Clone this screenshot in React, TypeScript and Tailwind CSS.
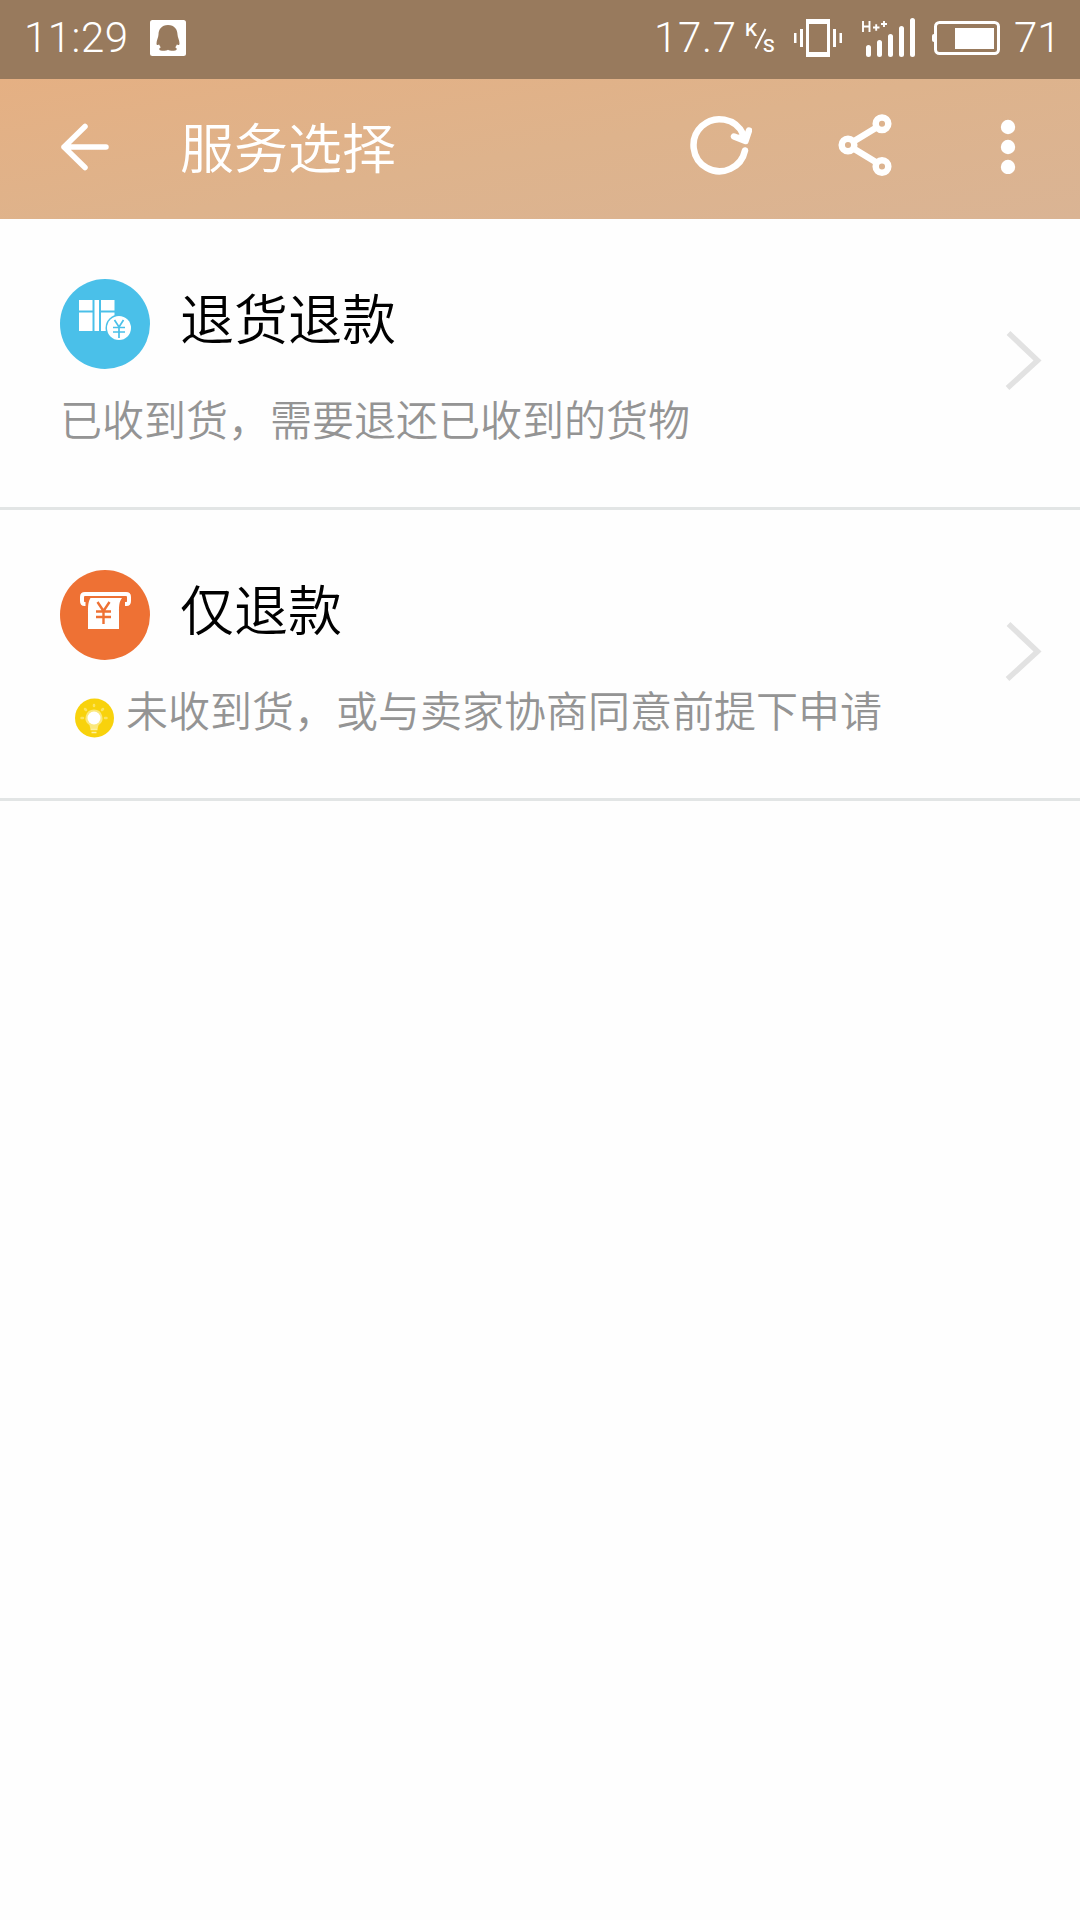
import type { ReactNode } from "react";

function StatusBar() {
  return (
    <div className="flex h-[79px] items-center bg-[#987a5d] pb-[3px] pl-[24px] pr-[24px] font-['Roboto',sans-serif] text-[42px] leading-none text-white">
      <span className="w-[126px] font-[350] tracking-[0.5px]">11:29</span>
      <svg width="36" height="36" viewBox="0 0 36 36">
        <rect width="36" height="36" rx="2.5" fill="#fff" />
        <path
          d="M18 5C11.5 5 8.5 9.5 8.5 14.5C8.5 17 6.5 20 6.5 23.5C6.5 25.5 8 25.5 9 24.2C9.6 25.7 10.2 26.6 10.8 27.3C8.6 28.3 8.5 30.5 12 30.8C14.5 31 17 30.5 18 29.8C19 30.5 21.5 31 24 30.8C27.5 30.5 27.4 28.3 25.2 27.3C25.8 26.6 26.4 25.7 27 24.2C28 25.5 29.5 25.5 29.5 23.5C29.5 20 27.5 17 27.5 14.5C27.5 9.5 24.5 5 18 5Z"
          fill="#987a5d"
        />
      </svg>

      <div className="ml-auto flex items-center">
        <span className="w-[91px] font-[350] tracking-[0.7px]">17.7</span>
        <div className="flex h-[34px] w-[49px] items-start text-[19px] font-medium leading-[18px]">
          <span>K</span>
          <svg width="13" height="22" viewBox="0 0 13 22" className="-ml-[3px] mt-[7px]" fill="none" stroke="#fff" strokeWidth="2">
            <path d="M1.500 20.500L11.500 1" />
          </svg>
          <span className="-ml-[4px] mt-[16px]">S</span>
        </div>
        {/* vibrate mode */}
        <svg width="48" height="40" viewBox="0 0 48 40" fill="#fff">
          <path fillRule="evenodd" d="M12 1H36V39H12ZM15 6V34H33V6Z" />
          <path d="M0 15h2.5v10H0zM6 11h3v18H6zM39 11h3v18h-3zM45.5 15H48v10h-2.5z" />
        </svg>
        {/* signal */}
        <svg width="54" height="40" viewBox="0 0 54 40" className="ml-[19px]" fill="none" stroke="#fff">
          <path d="M2 3V14M8.500 3V14M2 8.500H8.500" strokeWidth="1.900" />
          <path d="M12 9.500H18.500M15.200 6.200V12.700M20 6H26M23 3V9" strokeWidth="1.900" />
          <path d="M7.500 29.500V36.500M18.500 24.500V36.500M29.500 18.500V36.500M40.500 10.500V36.500M51.500 2.500V36.500" strokeWidth="5" strokeLinecap="round" />
        </svg>
        <svg width="68" height="34" viewBox="0 0 68 34" className="ml-[17px]" fill="#fff">
          <rect x="3.500" y="1.500" width="63" height="31" rx="4" fill="none" stroke="#fff" strokeWidth="3" />
          <rect y="13" width="4" height="8" rx="2" />
          <rect x="23" y="7" width="39" height="21" />
        </svg>
        <span className="ml-[14px] w-[42px] font-[350]">71</span>
      </div>
    </div>
  );
}

function Header() {
  return (
    <header className="flex h-[140px] items-center bg-linear-[170deg,#e5b083_0%,#deb38c_50%,#dab494_100%] pb-[6px] pl-[59px] text-white">
      <svg width="50" height="50" viewBox="0 0 50 50" fill="none" stroke="#fff" strokeWidth="5.500" strokeLinecap="round" strokeLinejoin="round">
        <path d="M26 5.500L5 26L26 46.500M5 26H47" />
      </svg>
      <h1 className="ml-[71px] text-[54px] font-[350] leading-[80px]">服务选择</h1>
      <div className="ml-auto flex items-center">
        <svg width="64" height="64" viewBox="0 0 64 64" fill="none" stroke="#fff" strokeWidth="6.500" strokeLinecap="round" strokeLinejoin="round">
          <path d="M57 36.500A26 26 0 1 1 55 20" />
          <path d="M46 22.500L57.500 27L61 16.500" fill="#fff" />
        </svg>
        <svg width="64" height="64" viewBox="0 0 64 64" className="ml-[82px]" fill="none" stroke="#fff" strokeWidth="6.500">
          <circle cx="14" cy="31" r="6.300" />
          <circle cx="48" cy="9.700" r="6.300" />
          <circle cx="48" cy="52.500" r="6.300" />
          <path d="M19.500 27.500L42.500 13.500M19.500 34.500L42.500 48.500" />
        </svg>
        <svg width="16" height="56" viewBox="0 0 16 56" className="ml-[102px] mr-[64px]" fill="#fff">
          <circle cx="8" cy="9" r="7.200" />
          <circle cx="8" cy="29" r="7.200" />
          <circle cx="8" cy="49" r="7.200" />
        </svg>
      </div>
    </header>
  );
}

function ReturnIcon() {
  return (
    <svg width="90" height="90" viewBox="0 0 90 90">
      <circle cx="45" cy="45" r="45" fill="#4ac0e9" />
      <path d="M19 21H32.500V31.500H19ZM34.500 21H39V52H34.500ZM41 21H54.500V31.500H41ZM19 33.500H32.500V52H19ZM41 33.500H54.500V52H41Z" fill="#fff" />
      <circle cx="59" cy="49" r="13.500" fill="#4ac0e9" />
      <circle cx="59" cy="49" r="12" fill="#fff" />
      <path d="M54.500 41L59 48L63.500 41M53 48.500H65M53 53H65M59 48V59" fill="none" stroke="#4ac0e9" strokeWidth="1.700" />
    </svg>
  );
}

function RefundIcon() {
  return (
    <svg width="90" height="90" viewBox="0 0 90 90">
      <circle cx="45" cy="45" r="45" fill="#ee7134" />
      <path d="M25.500 34H24.500Q22 34 22 31V27Q22 24 25 24H66Q69 24 69 27V31Q69 34 66.500 34H65" fill="none" stroke="#fff" strokeWidth="4" />
      <path d="M30.500 28H62C59 32 59 36 59 42V59H28V44C28 36 28 32 30.500 28Z" fill="#fff" />
      <path d="M37.500 32L43.500 41L49.500 32M36 41.500H51M36 47H51M43.500 41V54" fill="none" stroke="#ee7134" strokeWidth="2.400" />
    </svg>
  );
}

function BulbIcon() {
  return (
    <svg width="40" height="40" viewBox="0 0 40 40" className="ml-[14px] mr-[12px] mt-[18px]">
      <circle cx="20.500" cy="20" r="19.500" fill="#f8d20c" />
      <path d="M7.500 20h1.500M31 20h1.500M11 11l1 1M29 11l-1 1M20 7v1" stroke="#fbe360" strokeWidth="2.500" strokeLinecap="round" />
      <path d="M20 11.500A8.500 8.500 0 0 0 15.500 27.200L16.500 31H23.500L24.500 27.200A8.500 8.500 0 0 0 20 11.500Z" fill="#fbe87c" />
      <circle cx="20" cy="20" r="6.500" fill="#fff" />
      <path d="M16.500 31.500H23.500M17.500 34.500H22.500" stroke="#fdf0a0" strokeWidth="1.500" />
    </svg>
  );
}

type ServiceItemProps = {
  icon: ReactNode;
  title: string;
  desc: string;
  hint?: ReactNode;
};

function ServiceItem({ icon, title, desc, hint }: ServiceItemProps) {
  return (
    <li className="flex h-[291px] items-center border-b-[3px] border-[#e2e5e5] pl-[60px] pr-[38px]">
      <div className="flex h-full flex-1 flex-col pt-[60px]">
        <div className="flex h-[90px]">
          {icon}
          <h2 className="ml-[30px] text-[54px] font-[350] leading-[76px] text-black">{title}</h2>
        </div>
        <div className="mt-[19px] flex h-[60px] items-center">
          {hint}
          <p className="text-[42px] font-[350] leading-[60px] text-[#949494]">{desc}</p>
        </div>
      </div>
      <svg width="40" height="64" viewBox="0 0 40 64" className="-mt-[6px]" fill="none" stroke="#e2e2e2" strokeWidth="5.500">
        <path d="M6.500 5L35.500 32.500L5.500 60" />
      </svg>
    </li>
  );
}

export default function App() {
  return (
    <div className="flex h-[1920px] w-[1080px] flex-col bg-[#fefefe] font-['Noto_Sans_CJK_SC',sans-serif]">
      <StatusBar />
      <Header />
      <ul>
        <ServiceItem icon={<ReturnIcon />} title="退货退款" desc="已收到货，需要退还已收到的货物" />
        <ServiceItem icon={<RefundIcon />} title="仅退款" desc="未收到货，或与卖家协商同意前提下申请" hint={<BulbIcon />} />
      </ul>
    </div>
  );
}
